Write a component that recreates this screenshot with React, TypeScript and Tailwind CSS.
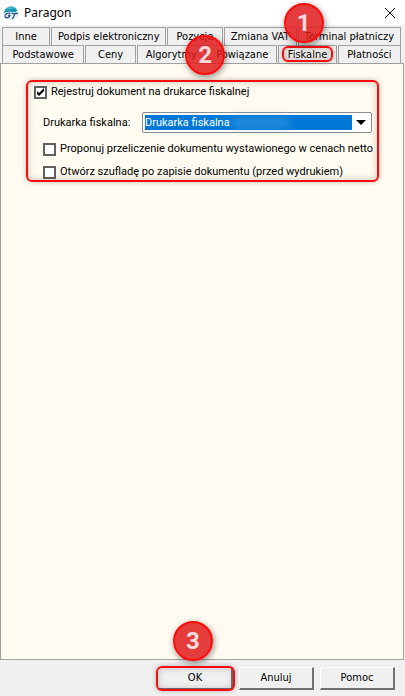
import type { ReactNode } from "react";

function Marker({ n, className }: { n: number; className: string }) {
  return (
    <span
      className={`pointer-events-none absolute z-20 flex size-10 items-center justify-center rounded-full border-2 border-[#ff0a0a] bg-[#e11b1b]/85 font-['Roboto',sans-serif] text-2xl leading-none font-bold text-[#fbdcdc] shadow-[1px_2px_6px_rgba(0,0,0,0.45)] ${className}`}
    >
      {n}
    </span>
  );
}

function Outline({ className }: { className: string }) {
  return (
    <span
      aria-hidden="true"
      className={`pointer-events-none absolute z-10 border-2 border-[#ff0a0a] shadow-[0_0_5px_rgba(60,40,20,0.3),inset_0_0_7px_rgba(60,40,20,0.25)] ${className}`}
    />
  );
}

function Tab({
  label,
  className,
  active = false,
  children,
}: {
  label: string;
  className: string;
  active?: boolean;
  children?: ReactNode;
}) {
  return (
    <div className={`relative h-full ${className}`}>
      <button
        type="button"
        role="tab"
        aria-selected={active}
        className="block h-full w-full border-x border-t border-[#a0a0a0] bg-[#f0f0f0] text-center whitespace-nowrap"
      >
        {label}
      </button>
      {children}
    </div>
  );
}

function Check({
  label,
  checked = false,
}: {
  label: string;
  checked?: boolean;
}) {
  return (
    <label className="flex items-center gap-1 whitespace-nowrap">
      <span className="relative block size-[13px] shrink-0">
        <input
          type="checkbox"
          defaultChecked={checked}
          className="peer block size-[13px] appearance-none border-2 border-[#606060] bg-white"
        />
        <svg
          aria-hidden="true"
          viewBox="0 0 13 13"
          className="pointer-events-none absolute inset-0 hidden size-[13px] peer-checked:block"
        >
          <path d="M3 5v3l2 2 5-5V2L5 7z" fill="#000" />
        </svg>
      </span>
      {label}
    </label>
  );
}

function PushButton({ label }: { label: string }) {
  return (
    <button
      type="button"
      className="h-[23px] w-[75px] border-t border-r-2 border-b-2 border-l border-t-white border-r-[#707070] border-b-[#707070] border-l-white bg-[#f0f0f0]"
    >
      {label}
    </button>
  );
}

function AppIcon() {
  return (
    <svg aria-hidden="true" viewBox="0 0 16 16" className="size-4">
      <circle cx="8" cy="8" r="7" fill="#dfe6ec" />
      <path d="M1.200 8.500A6.800 6.800 0 0 1 14.200 5.500L13 7H7z" fill="#1797b4" />
      <path d="M2.500 5A6.800 6.800 0 0 1 13 3.500C9 3 6 4.500 2.500 5z" fill="#45bccb" />
      <path
        d="M7.500 8.500C4.500 7.500 2 9 2 11c0 2.500 4 2.500 5-.5H5M8.500 8.500H15M12 8.500 9.500 14"
        fill="none"
        stroke="#fff"
        strokeWidth="3"
      />
      <path
        d="M7.500 8.500C4.500 7.500 2 9 2 11c0 2.500 4 2.500 5-.5H5M8.500 8.500H15M12 8.500 9.500 14"
        fill="none"
        stroke="#2b568f"
        strokeWidth="1.400"
      />
    </svg>
  );
}

export default function App() {
  return (
    <main className="flex min-h-screen flex-col overflow-hidden bg-[#f0f0f0] font-['DejaVu_Sans_Condensed','DejaVu_Sans',sans-serif] text-[11px] leading-4 text-black">
      <header className="flex h-[25px] shrink-0 items-center justify-between bg-white pr-[9px] pl-[3px]">
        <h1 className="flex items-center gap-[5px] font-['Noto_Sans',sans-serif] text-xs">
          <AppIcon />
          Paragon
        </h1>
        <button type="button" aria-label="Zamknij">
          <svg viewBox="0 0 12 12" className="size-3">
            <path d="m1 1 10 10M11 1 1 11" stroke="#111" fill="none" />
          </svg>
        </button>
      </header>

      <div role="tablist" className="mt-0.5 pr-[4px] pl-0.5">
        <div className="flex h-[18px] gap-px">
          <Tab label="Inne" className="grow-48 basis-0" />
          <Tab label="Podpis elektroniczny" className="grow-115 basis-0" />
          <Tab label="Pozycje" className="grow-55 basis-0" />
          <Tab label="Zmiana VAT" className="grow-73 basis-0" />
          <Tab label="Terminal płatniczy" className="grow-103 basis-0">
            <Marker n={1} className="-top-6 -left-3.5" />
          </Tab>
        </div>
        <div className="flex h-[18px] gap-px">
          <Tab label="Podstawowe" className="grow-82 basis-0" />
          <Tab label="Ceny" className="grow-50 basis-0" />
          <Tab label="Algorytmy" className="grow-69 basis-0" />
          <Tab label="Powiązane" className="grow-70 basis-0">
            <Marker n={2} className="-top-2.5 -left-[22px]" />
          </Tab>
          <Tab label="Fiskalne" active className="z-10 -mb-px grow-58 basis-0">
            <Outline className="inset-x-1 top-px bottom-px rounded-md" />
          </Tab>
          <Tab label="Płatności" className="grow-63 basis-0" />
        </div>
      </div>

      <section className="mr-px flex-1 border border-[#a0a0a0] bg-[#fffbf0] pt-4 pr-6 pl-[25px]">
        <div className="relative">
          <Outline className="inset-0 rounded-md" />
          <div className="flex h-[102px] flex-col pt-1 pl-2 font-['Roboto',sans-serif]">
            <Check label="Rejestruj dokument na drukarce fiskalnej" checked />
            <div className="mt-3 flex items-center pl-[9px]">
              <label htmlFor="printer" className="w-[99px] whitespace-nowrap">
                Drukarka fiskalna:
              </label>
              <div className="relative mr-[7px] h-[21px] flex-1 rounded-xs border border-[#8a8a8a] bg-white p-0.5 pr-[19px]">
                <select
                  id="printer"
                  className="block h-[15px] w-full appearance-none bg-[#0078d7] text-[11px] leading-4 text-white outline-none"
                >
                  <option>Drukarka fiskalna</option>
                </select>
                <span
                  aria-hidden="true"
                  className="pointer-events-none absolute top-1 left-[90px] h-3 w-14 bg-[#5aa9e6]/40 blur-xs"
                />
                <svg
                  aria-hidden="true"
                  viewBox="0 0 10 5"
                  className="pointer-events-none absolute top-[7px] right-[5px] h-[5px] w-2.5"
                >
                  <path d="M0 0h10L5 5z" fill="#000" />
                </svg>
              </div>
            </div>
            <div className="mt-2 flex flex-col gap-[7px] pl-[9px]">
              <Check label="Proponuj przeliczenie dokumentu wystawionego w cenach netto" />
              <Check label="Otwórz szufladę po zapisie dokumentu (przed wydrukiem)" />
            </div>
          </div>
        </div>
      </section>

      <footer className="flex h-9 shrink-0 items-start justify-end gap-1.5 pt-[7px] pr-[10px]">
        <div className="relative">
          <PushButton label="OK" />
          <Outline className="-inset-x-0.5 -inset-y-px rounded-md" />
          <Marker n={3} className="bottom-[29px] left-[15px]" />
        </div>
        <PushButton label="Anuluj" />
        <PushButton label="Pomoc" />
      </footer>
    </main>
  );
}
